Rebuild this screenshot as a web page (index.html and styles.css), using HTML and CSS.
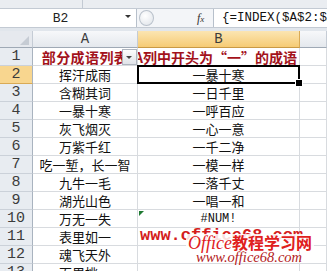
FILE: index.html
```html
<!DOCTYPE html>
<html lang="zh-CN">
<head>
    <meta charset="UTF-8">
    <meta name="viewport" content="width=device-width, initial-scale=1.0">
    <title>提取开头为“一”的成语</title>
    <link rel="stylesheet" href="styles.css">
</head>
<body>
    <div class="window">
        <div class="ribbon-edge"><span class="ribbon-group"></span></div>

        <div class="formula-bar">
            <div class="name-box">
                <span class="ref">B2</span>
                <span class="arrow"></span>
            </div>
            <span class="grip"></span>
            <span class="fx">f<small>x</small></span>
            <div class="formula">{=INDEX($A$2:$A$15,SMALL(IF(LEFT($A$2:$A$15,1)="一",ROW($A$2:$A$15)-1,4^8),ROW(1:1)))}</div>
        </div>

        <div class="sheet">
            <div class="corner"></div>
            <div class="col-head">A</div>
            <div class="col-head active">B</div>
            <div class="col-head"></div>

            <div class="row-head">1</div>
            <div class="cell title">部分成语列表<span class="filter-btn"></span></div>
            <div class="cell title right">A列中开头为“一”的成语</div>
            <div class="cell"></div>

            <div class="row-head active">2</div>
            <div class="cell">挥汗成雨</div>
            <div class="cell selected">一暴十寒</div>
            <div class="cell"></div>

            <div class="row-head">3</div>
            <div class="cell">含糊其词</div>
            <div class="cell">一日千里</div>
            <div class="cell"></div>

            <div class="row-head">4</div>
            <div class="cell">一暴十寒</div>
            <div class="cell">一呼百应</div>
            <div class="cell"></div>

            <div class="row-head">5</div>
            <div class="cell">灰飞烟灭</div>
            <div class="cell">一心一意</div>
            <div class="cell"></div>

            <div class="row-head">6</div>
            <div class="cell">万紫千红</div>
            <div class="cell">一千二净</div>
            <div class="cell"></div>

            <div class="row-head">7</div>
            <div class="cell">吃一堑，长一智</div>
            <div class="cell">一模一样</div>
            <div class="cell"></div>

            <div class="row-head">8</div>
            <div class="cell">九牛一毛</div>
            <div class="cell">一落千丈</div>
            <div class="cell"></div>

            <div class="row-head">9</div>
            <div class="cell">湖光山色</div>
            <div class="cell">一唱一和</div>
            <div class="cell"></div>

            <div class="row-head">10</div>
            <div class="cell">万无一失</div>
            <div class="cell error">#NUM!</div>
            <div class="cell"></div>

            <div class="row-head">11</div>
            <div class="cell">表里如一</div>
            <div class="cell"></div>
            <div class="cell"></div>

            <div class="row-head">12</div>
            <div class="cell">魂飞天外</div>
            <div class="cell"></div>
            <div class="cell"></div>

            <div class="row-head">13</div>
            <div class="cell">百里挑一</div>
            <div class="cell"></div>
            <div class="cell"></div>
        </div>

        <!-- site watermark over the sheet -->
        <div class="wm-url">www.office68.com</div>
        <div class="wm-logo"><i>Office</i>教程学习网</div>
        <div class="wm-site">www.office68.com</div>
    </div>
</body>
</html>
```

FILE: styles.css
```css
* {
    box-sizing: border-box;
}
body {
    margin: 0;
    background: #e1e6ec;
    font-family: "Noto Sans CJK SC", sans-serif;
}
.window {
    position: relative;
    width: 327px;
    height: 271px;
    overflow: hidden;
    background: #e1e6ec;
}

/* top: ribbon edge + formula bar */
.ribbon-edge {
    display: flex;
    height: 9px;
    background: #eaedf1;
    border-bottom: 1px solid #c3cad3;
}
.ribbon-group {
    width: 83px;
    border-right: 1px solid #c3cad3;
}
.formula-bar {
    display: flex;
    align-items: center;
    height: 19px;
    margin-bottom: 3px;
    background: #f3f5f8;
    border-bottom: 1px solid #c3cad3;
}
.name-box {
    display: flex;
    align-items: center;
    width: 137px;
    height: 100%;
    background: #fff;
    border-right: 1px solid #b7c0cb;
    font-family: "Liberation Mono", monospace;
    font-size: 13px;
    color: #222;
}
.name-box .ref {
    width: 121px;
    text-align: center;
}
.name-box .arrow {
    width: 0;
    height: 0;
    margin: -3px 0 0 4px;
    border-left: 3px solid transparent;
    border-right: 3px solid transparent;
    border-top: 3px solid #333;
}
.grip {
    width: 15px;
    height: 16px;
    margin-left: 2px;
    border: 1px solid #b9c1cb;
    border-radius: 50%;
    background: radial-gradient(circle at 40% 35%, #ffffff, #dde2e8);
}
.fx {
    margin-left: 43px;
    width: 16px;
    font-family: "Liberation Serif", serif;
    font-style: italic;
    font-size: 12px;
    color: #333;
}
.fx small {
    font-size: 9px;
}
.formula {
    flex: 1;
    height: 100%;
    padding-left: 8px;
    background: #fff;
    border-left: 1px solid #b7c0cb;
    font-family: "Liberation Mono", monospace;
    font-size: 12.5px;
    line-height: 18px;
    color: #111;
    white-space: nowrap;
    overflow: hidden;
}

/* sheet grid */
.sheet {
    display: grid;
    grid-template-columns: 33px 105px 162px 1fr;
    grid-template-rows: 17px;
    grid-auto-rows: 18px;
    background: #fff;
}
.corner,
.col-head,
.row-head {
    display: flex;
    align-items: center;
    justify-content: center;
    font-family: "Liberation Mono", monospace;
    color: #3c3c3c;
}
.corner {
    position: relative;
    background: #e6e9ee;
    border-right: 1px solid #c5ccd5;
    border-bottom: 1px solid #9fa9b5;
}
.corner::after {
    content: "";
    position: absolute;
    right: 3px;
    bottom: 2px;
    border-left: 9px solid transparent;
    border-bottom: 9px solid #c6ccd4;
}
.col-head {
    font-size: 14px;
    background: linear-gradient(#f7f8fa, #e4e8ed);
    border-right: 1px solid #c5ccd5;
    border-bottom: 1px solid #9fa9b5;
}
.col-head.active {
    background: linear-gradient(#fbe5b2, #f6cb74);
    border-right-color: #d9aa55;
    border-bottom-color: #c99a45;
}
.row-head {
    font-size: 15px;
    background: #e8ecf1;
    border-right: 1px solid #a9b3bf;
    border-bottom: 1px solid #cbd1d9;
}
.row-head.active {
    background: #f8d68f;
    border-bottom-color: #d9aa55;
}
.cell {
    position: relative;
    display: flex;
    align-items: center;
    justify-content: center;
    overflow: hidden;
    white-space: nowrap;
    font-size: 13px;
    color: #111;
    border-right: 1px solid #d8dbdf;
    border-bottom: 1px solid #d8dbdf;
}
.cell.title {
    font-size: 14px;
    font-weight: bold;
    letter-spacing: 0.4px;
    color: #a3121b;
}
.cell.title.right {
    justify-content: flex-end;
    padding-right: 2px;
    letter-spacing: 0;
}
.filter-btn {
    position: absolute;
    top: 1px;
    right: 0;
    bottom: 0;
    width: 15px;
    border: 1px solid #aeb5bf;
    background: linear-gradient(#fdfdfd, #dfe3e8);
}
.filter-btn::after {
    content: "";
    position: absolute;
    left: 3px;
    top: 6px;
    border-left: 3px solid transparent;
    border-right: 3px solid transparent;
    border-top: 3px solid #444;
}
.cell.selected {
    overflow: visible;
}
.cell.selected::after {
    content: "";
    position: absolute;
    top: -1px;
    left: -1px;
    right: -1px;
    bottom: -1px;
    border: 2px solid #000;
}
.cell.selected::before {
    content: "";
    position: absolute;
    right: -4px;
    bottom: -4px;
    width: 6px;
    height: 6px;
    background: #000;
    border: 1px solid #fff;
    z-index: 1;
}
.cell.error {
    font-family: "Liberation Mono", monospace;
    font-size: 12px;
}
.cell.error::before {
    content: "";
    position: absolute;
    top: 1px;
    left: 1px;
    border-top: 5px solid #1f7a32;
    border-right: 5px solid transparent;
}

/* watermark */
.wm-url {
    position: absolute;
    left: 140px;
    top: 227px;
    font-family: "Liberation Mono", monospace;
    font-size: 17px;
    font-weight: bold;
    color: #d41c1c;
    line-height: 17px;
}
.wm-logo {
    position: absolute;
    left: 186px;
    top: 234px;
    padding: 0 2px;
    background: rgba(255, 255, 255, 0.85);
    font-size: 16px;
    font-weight: bold;
    line-height: 16px;
    color: #e0201c;
    text-shadow: 0 0 2px #fff, 0 0 2px #fff;
}
.wm-logo i {
    font-family: "Liberation Serif", serif;
    font-size: 18px;
    font-weight: normal;
}
.wm-site {
    position: absolute;
    left: 196px;
    top: 250px;
    font-family: "Liberation Serif", serif;
    font-style: italic;
    font-size: 14.5px;
    line-height: 14px;
    color: #b3191b;
    text-shadow: 0 0 2px #fff;
}
```
